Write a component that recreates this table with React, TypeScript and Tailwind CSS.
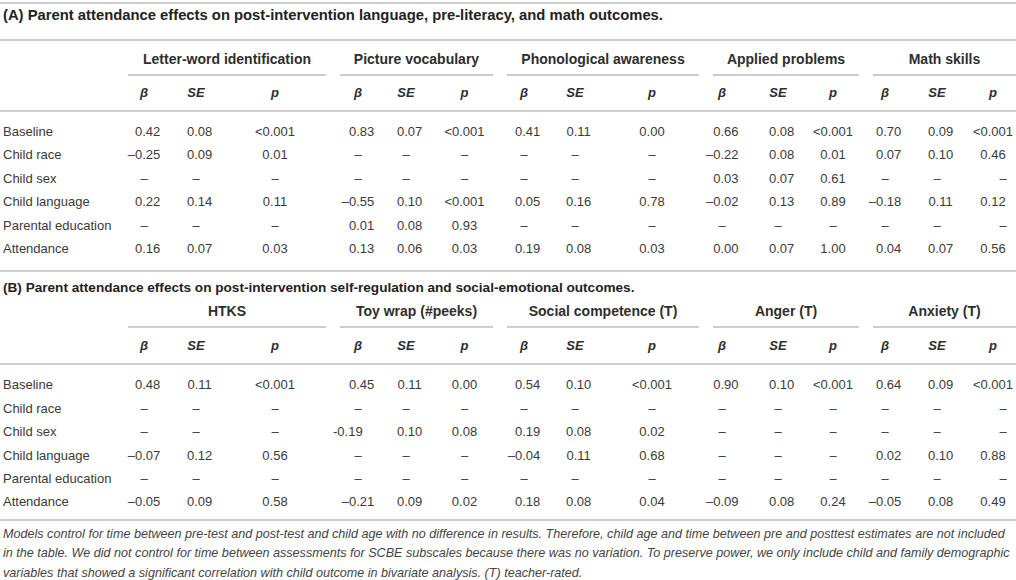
const GRID =
  "grid grid-cols-[121px_46px_58px_108px_50px_46px_71px_48px_54px_104px_46px_52px_62px_38px_66px_53px]";

// extra right padding nudges a column's centre left so it lines up with the source
const PAD = ["", "", "pr-[8px]", "", "", "", "", "", "pr-[4px]", "pr-[14px]", "", "pr-[4px]", "", "", "pr-[7px]"];

type Row = { label: string; v: string[] };

const groupsA = [
  "Letter-word identification",
  "Picture vocabulary",
  "Phonological awareness",
  "Applied problems",
  "Math skills",
];
const groupsB = ["HTKS", "Toy wrap (#peeks)", "Social competence (T)", "Anger (T)", "Anxiety (T)"];

const D = "–";

const rowsA: Row[] = [
  { label: "Baseline", v: ["0.42", "0.08", "<0.001", "0.83", "0.07", "<0.001", "0.41", "0.11", "0.00", "0.66", "0.08", "<0.001", "0.70", "0.09", "<0.001"] },
  { label: "Child race", v: ["–0.25", "0.09", "0.01", D, D, D, D, D, D, "–0.22", "0.08", "0.01", "0.07", "0.10", "0.46"] },
  { label: "Child sex", v: [D, D, D, D, D, D, D, D, D, "0.03", "0.07", "0.61", D, D, D] },
  { label: "Child language", v: ["0.22", "0.14", "0.11", "–0.55", "0.10", "<0.001", "0.05", "0.16", "0.78", "–0.02", "0.13", "0.89", "–0.18", "0.11", "0.12"] },
  { label: "Parental education", v: [D, D, D, "0.01", "0.08", "0.93", D, D, D, D, D, D, D, D, D] },
  { label: "Attendance", v: ["0.16", "0.07", "0.03", "0.13", "0.06", "0.03", "0.19", "0.08", "0.03", "0.00", "0.07", "1.00", "0.04", "0.07", "0.56"] },
];

const rowsB: Row[] = [
  { label: "Baseline", v: ["0.48", "0.11", "<0.001", "0.45", "0.11", "0.00", "0.54", "0.10", "<0.001", "0.90", "0.10", "<0.001", "0.64", "0.09", "<0.001"] },
  { label: "Child race", v: [D, D, D, D, D, D, D, D, D, D, D, D, D, D, D] },
  { label: "Child sex", v: [D, D, D, "-0.19", "0.10", "0.08", "0.19", "0.08", "0.02", D, D, D, D, D, D] },
  { label: "Child language", v: ["–0.07", "0.12", "0.56", D, D, D, "–0.04", "0.11", "0.68", D, D, D, "0.02", "0.10", "0.88"] },
  { label: "Parental education", v: [D, D, D, D, D, D, D, D, D, D, D, D, D, D, D] },
  { label: "Attendance", v: ["–0.05", "0.09", "0.58", "–0.21", "0.09", "0.02", "0.18", "0.08", "0.04", "–0.09", "0.08", "0.24", "–0.05", "0.08", "0.49"] },
];

function Rule() {
  return <div className="h-[2px] bg-[#cdcdcd]" />;
}

function GroupHeads({ groups, top }: { groups: string[]; top: string }) {
  return (
    <div className={GRID}>
      <div />
      {groups.map((g) => (
        <div key={g} className={`col-span-3 px-[7px] ${top}`}>
          <div className="h-[22px] leading-[22px] text-center text-[14px] font-bold text-[#2e2e2e] whitespace-nowrap">
            {g}
          </div>
          <div className="mt-[4px] h-[2px] bg-[#cdcdcd]" />
        </div>
      ))}
    </div>
  );
}

function SubHeads({ top }: { top: string }) {
  const labels = ["β", "SE", "p"];
  return (
    <div className={`${GRID} ${top} pb-[6px]`}>
      <div />
      {PAD.map((pad, i) => (
        <div key={i} className={`h-[22px] leading-[22px] text-center font-bold italic text-[#2e2e2e] ${pad}`}>
          {labels[i % 3]}
        </div>
      ))}
    </div>
  );
}

// β and SE columns are decimal-aligned in the source: positives carry a hidden minus
function Cell({ v, i }: { v: string; i: number }) {
  if (v === "-0.19") return <div className="text-center whitespace-nowrap pr-[37px]">{v}</div>;
  if (v === D) {
    return <div className={`text-center ${i === 14 ? "pl-[13px]" : PAD[i]}`}>{v}</div>;
  }
  const aligned = i % 3 !== 2 && !v.startsWith("–");
  return (
    <div className={`text-center whitespace-nowrap ${PAD[i]}`}>
      {aligned && <span className="invisible">–</span>}
      {v}
    </div>
  );
}

function Body({ rows, top, bottom }: { rows: Row[]; top: string; bottom: string }) {
  return (
    <div className={`${top} ${bottom}`}>
      {rows.map((r) => (
        <div key={r.label} className={`${GRID} h-[23.4px] leading-[23.4px]`}>
          <div className="pl-[3px] whitespace-nowrap">{r.label}</div>
          {r.v.map((v, i) => (
            <Cell key={i} v={v} i={i} />
          ))}
        </div>
      ))}
    </div>
  );
}

export default function App() {
  return (
    <div className="w-[1016px] h-[580px] overflow-hidden bg-white text-[13px] text-[#3a3a3a] font-['Liberation_Sans',Arial,sans-serif]">
      <div className="w-[1023px]">
        <div className="mt-[2px]">
          <Rule />
        </div>

        {/* (A) */}
        <div className="h-[35px] pl-[3px] leading-[22px] text-[14.8px] font-bold text-[#222] whitespace-nowrap">
          (A) Parent attendance effects on post-intervention language, pre-literacy, and math outcomes.
        </div>
        <Rule />
        <GroupHeads groups={groupsA} top="pt-[7px]" />
        <SubHeads top="pt-[6px]" />
        <Rule />
        <Body rows={rowsA} top="pt-[8px]" bottom="pb-[10px]" />
        <Rule />

        {/* (B) */}
        <div className="h-[28px] pt-[5px] pl-[3px] leading-[22px] text-[13.6px] font-bold text-[#222] whitespace-nowrap">
          (B) Parent attendance effects on post-intervention self-regulation and social-emotional outcomes.
        </div>
        <GroupHeads groups={groupsB} top="pt-0" />
        <SubHeads top="pt-[7px]" />
        <Rule />
        <Body rows={rowsB} top="pt-[8px]" bottom="pb-[5px]" />
        <Rule />

        <div className="pt-[4px] pl-[3px] italic leading-[19.5px] text-[12.6px] text-[#444]">
          <div className="whitespace-nowrap">
            Models control for time between pre-test and post-test and child age with no difference in results. Therefore, child age and time between pre and posttest estimates are not included
          </div>
          <div className="whitespace-nowrap">
            in the table. We did not control for time between assessments for SCBE subscales because there was no variation. To preserve power, we only include child and family demographic
          </div>
          <div className="whitespace-nowrap">
            variables that showed a significant correlation with child outcome in bivariate analysis. (T) teacher-rated.
          </div>
        </div>
      </div>
    </div>
  );
}
